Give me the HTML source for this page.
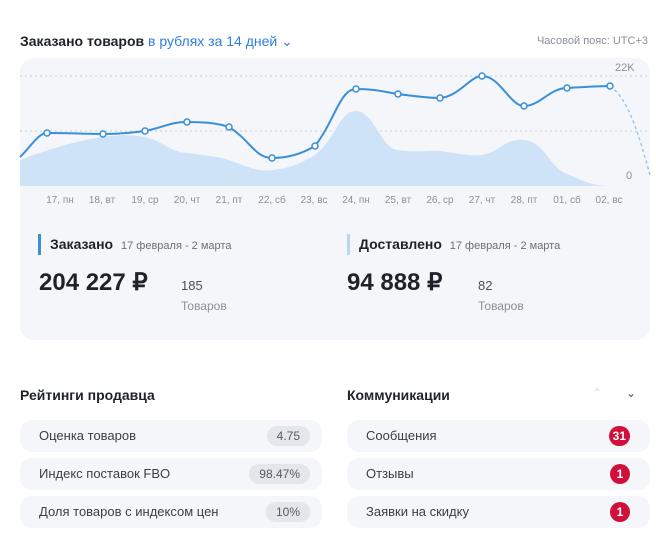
<!DOCTYPE html><html><head><meta charset="utf-8"><style>
body{margin:0;width:656px;height:540px;background:#fff;font-family:"Liberation Sans",sans-serif;position:relative;overflow:hidden;color:#1f2329}
.a{position:absolute;white-space:nowrap}
.card{position:absolute;left:20px;top:58px;width:630px;height:282px;background:#f4f6f9;border-radius:14px;overflow:hidden}
.row{position:absolute;height:32px;background:#f4f6f9;border-radius:12px;font-size:13px;color:#3a3f47}
.row span{position:absolute;left:19px;top:8px}
.pill{position:absolute;top:6px;right:12px;height:20px;line-height:20px;padding:0 10px;border-radius:10px;background:#e3e6eb;font-size:12px;color:#555b63}
.red{position:absolute;top:6px;right:20px;height:20px;line-height:20px;min-width:12px;padding:0 4px;text-align:center;border-radius:10px;background:#d0103a;color:#fff;font-size:12px;font-weight:bold}
.lbl{position:absolute;top:195px;font-size:10px;color:#8a9099;transform:translateX(-50%)}
</style></head><body>
<div class="a" style="left:20px;top:33px;font-size:14px;font-weight:bold">Заказано товаров <span style="font-weight:normal;color:#2f7de1">в рублях за 14 дней ⌄</span></div>
<div class="a" style="right:8px;top:35px;font-size:11px;color:#8a9099">Часовой пояс: UTC+3</div>
<div class="card"></div>
<svg class="a" style="left:0;top:0" width="656" height="200">
<line x1="20" y1="76" x2="650" y2="76" stroke="#c9ced6" stroke-dasharray="2,3"/>
<line x1="20" y1="131" x2="650" y2="131" stroke="#c9ced6" stroke-dasharray="2,3"/>
<path d="M20 160 C60 145,110 130,145 137 C165 142,170 152,187 153 C210 156,220 157,229 160 C250 168,260 172,272 170 C295 168,305 160,315 155 C335 140,340 110,356 111 C375 112,380 148,398 150 C420 153,430 150,440 151 C460 154,470 156,482 155 C500 152,505 138,524 140 C545 142,550 168,567 174 C585 182,595 186,610 186 L20 186Z" fill="#cfe3f8"/>
<path d="M20 157 C30 148,38 133,47 133 C70 133,85 134,103 134 C120 134,130 133,145 131 C165 127,170 122,187 122 C210 122,220 124,229 127 C250 140,255 158,272 158 C290 158,305 152,315 146 C335 120,340 89,356 89 C375 89,385 92,398 94 C420 97,430 98,440 98 C460 96,470 76,482 76 C500 76,510 106,524 106 C540 106,550 88,567 88 C585 87,600 86,610 86" fill="none" stroke="#3a8fd9" stroke-width="2"/>
<path d="M610 86 C630 100,640 140,650 175" fill="none" stroke="#9cc4ea" stroke-width="1.5" stroke-dasharray="3,3"/>
<g fill="#fff" stroke="#3a8fd9" stroke-width="1.5">
<circle cx="47" cy="133" r="3"/><circle cx="103" cy="134" r="3"/><circle cx="145" cy="131" r="3"/><circle cx="187" cy="122" r="3"/><circle cx="229" cy="127" r="3"/><circle cx="272" cy="158" r="3"/><circle cx="315" cy="146" r="3"/><circle cx="356" cy="89" r="3"/><circle cx="398" cy="94" r="3"/><circle cx="440" cy="98" r="3"/><circle cx="482" cy="76" r="3"/><circle cx="524" cy="106" r="3"/><circle cx="567" cy="88" r="3"/><circle cx="610" cy="86" r="3"/></g>
<text x="615" y="71" font-size="11" fill="#8a9099" font-family="Liberation Sans">22K</text>
<text x="626" y="179" font-size="11" fill="#8a9099" font-family="Liberation Sans">0</text>
</svg>
<div class="lbl" style="left:60px">17, пн</div><div class="lbl" style="left:102px">18, вт</div><div class="lbl" style="left:145px">19, ср</div><div class="lbl" style="left:187px">20, чт</div><div class="lbl" style="left:229px">21, пт</div><div class="lbl" style="left:272px">22, сб</div><div class="lbl" style="left:314px">23, вс</div><div class="lbl" style="left:356px">24, пн</div><div class="lbl" style="left:398px">25, вт</div><div class="lbl" style="left:440px">26, ср</div><div class="lbl" style="left:482px">27, чт</div><div class="lbl" style="left:524px">28, пт</div><div class="lbl" style="left:567px">01, сб</div><div class="lbl" style="left:609px">02, вс</div>
<div class="a" style="left:38px;top:234px;width:3px;height:21px;background:#3a8fd9"></div>
<div class="a" style="left:50px;top:236px;font-size:14px;font-weight:bold">Заказано <span style="font-size:11px;font-weight:normal;color:#6b7078;margin-left:4px">17 февраля - 2 марта</span></div>
<div class="a" style="left:39px;top:268px;font-size:24px;font-weight:bold">204 227 ₽</div>
<div class="a" style="left:181px;top:278px;font-size:13px;color:#4a4f57">185</div>
<div class="a" style="left:181px;top:299px;font-size:12px;color:#8a9099">Товаров</div>
<div class="a" style="left:347px;top:234px;width:3px;height:21px;background:#b9d7f4"></div>
<div class="a" style="left:359px;top:236px;font-size:14px;font-weight:bold">Доставлено <span style="font-size:11px;font-weight:normal;color:#6b7078;margin-left:4px">17 февраля - 2 марта</span></div>
<div class="a" style="left:347px;top:268px;font-size:24px;font-weight:bold">94 888 ₽</div>
<div class="a" style="left:478px;top:278px;font-size:13px;color:#4a4f57">82</div>
<div class="a" style="left:478px;top:299px;font-size:12px;color:#8a9099">Товаров</div>
<div class="a" style="left:20px;top:387px;font-size:14px;font-weight:bold">Рейтинги продавца</div>
<div class="a" style="left:347px;top:387px;font-size:14px;font-weight:bold">Коммуникации</div>
<div class="a" style="left:592px;top:386px;font-size:12px;color:#d8dbe0">⌃</div>
<div class="a" style="left:626px;top:386px;font-size:12px;color:#555">⌄</div>
<div class="row" style="left:20px;top:420px;width:302px"><span>Оценка товаров</span><div class="pill">4.75</div></div>
<div class="row" style="left:20px;top:458px;width:302px"><span>Индекс поставок FBO</span><div class="pill">98.47%</div></div>
<div class="row" style="left:20px;top:496px;width:302px"><span>Доля товаров с индексом цен</span><div class="pill">10%</div></div>
<div class="row" style="left:347px;top:420px;width:303px"><span>Сообщения</span><div class="red">31</div></div>
<div class="row" style="left:347px;top:458px;width:303px"><span>Отзывы</span><div class="red">1</div></div>
<div class="row" style="left:347px;top:496px;width:303px"><span>Заявки на скидку</span><div class="red">1</div></div>
</body></html>
